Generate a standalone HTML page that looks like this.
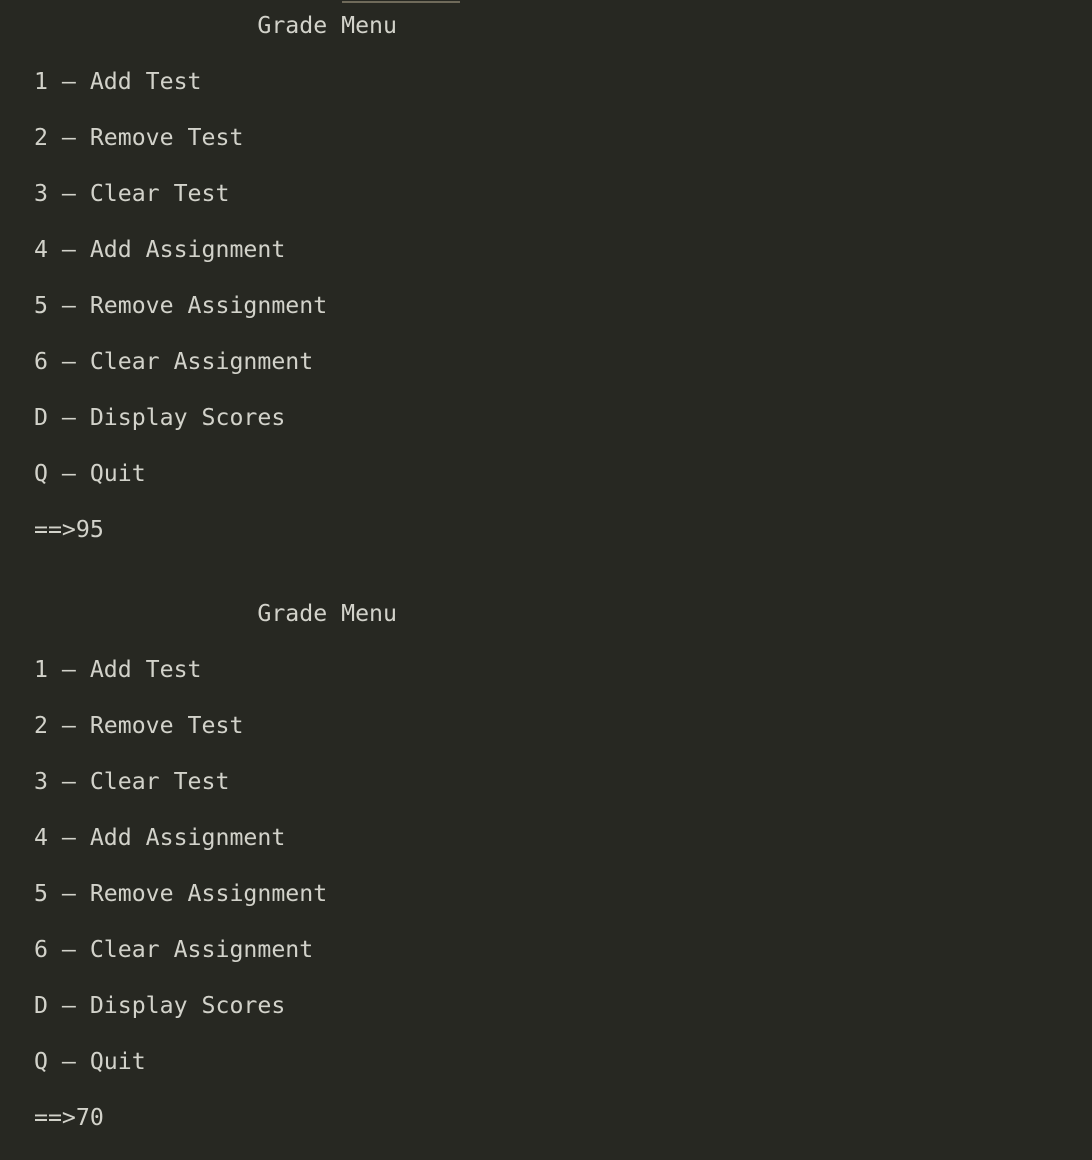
<!DOCTYPE html>
<html><head><meta charset="utf-8"><style>
html,body{margin:0;padding:0;background:#272822;width:1092px;height:1160px;overflow:hidden}
.l{position:absolute;left:34px;height:28px;line-height:28px;font-family:"DejaVu Sans Mono","Liberation Mono",monospace;font-size:23.2px;color:#d2d2ca;white-space:pre}
.bar{position:absolute;left:342px;top:1px;width:118px;height:2px;background:#6f6a5a}
</style></head><body>
<div class="bar"></div>
<div class="l" style="top:12px">                Grade Menu</div>
<div class="l" style="top:68px">1 – Add Test</div>
<div class="l" style="top:124px">2 – Remove Test</div>
<div class="l" style="top:180px">3 – Clear Test</div>
<div class="l" style="top:236px">4 – Add Assignment</div>
<div class="l" style="top:292px">5 – Remove Assignment</div>
<div class="l" style="top:348px">6 – Clear Assignment</div>
<div class="l" style="top:404px">D – Display Scores</div>
<div class="l" style="top:460px">Q – Quit</div>
<div class="l" style="top:516px">==>95</div>
<div class="l" style="top:600px">                Grade Menu</div>
<div class="l" style="top:656px">1 – Add Test</div>
<div class="l" style="top:712px">2 – Remove Test</div>
<div class="l" style="top:768px">3 – Clear Test</div>
<div class="l" style="top:824px">4 – Add Assignment</div>
<div class="l" style="top:880px">5 – Remove Assignment</div>
<div class="l" style="top:936px">6 – Clear Assignment</div>
<div class="l" style="top:992px">D – Display Scores</div>
<div class="l" style="top:1048px">Q – Quit</div>
<div class="l" style="top:1104px">==>70</div>
</body></html>
